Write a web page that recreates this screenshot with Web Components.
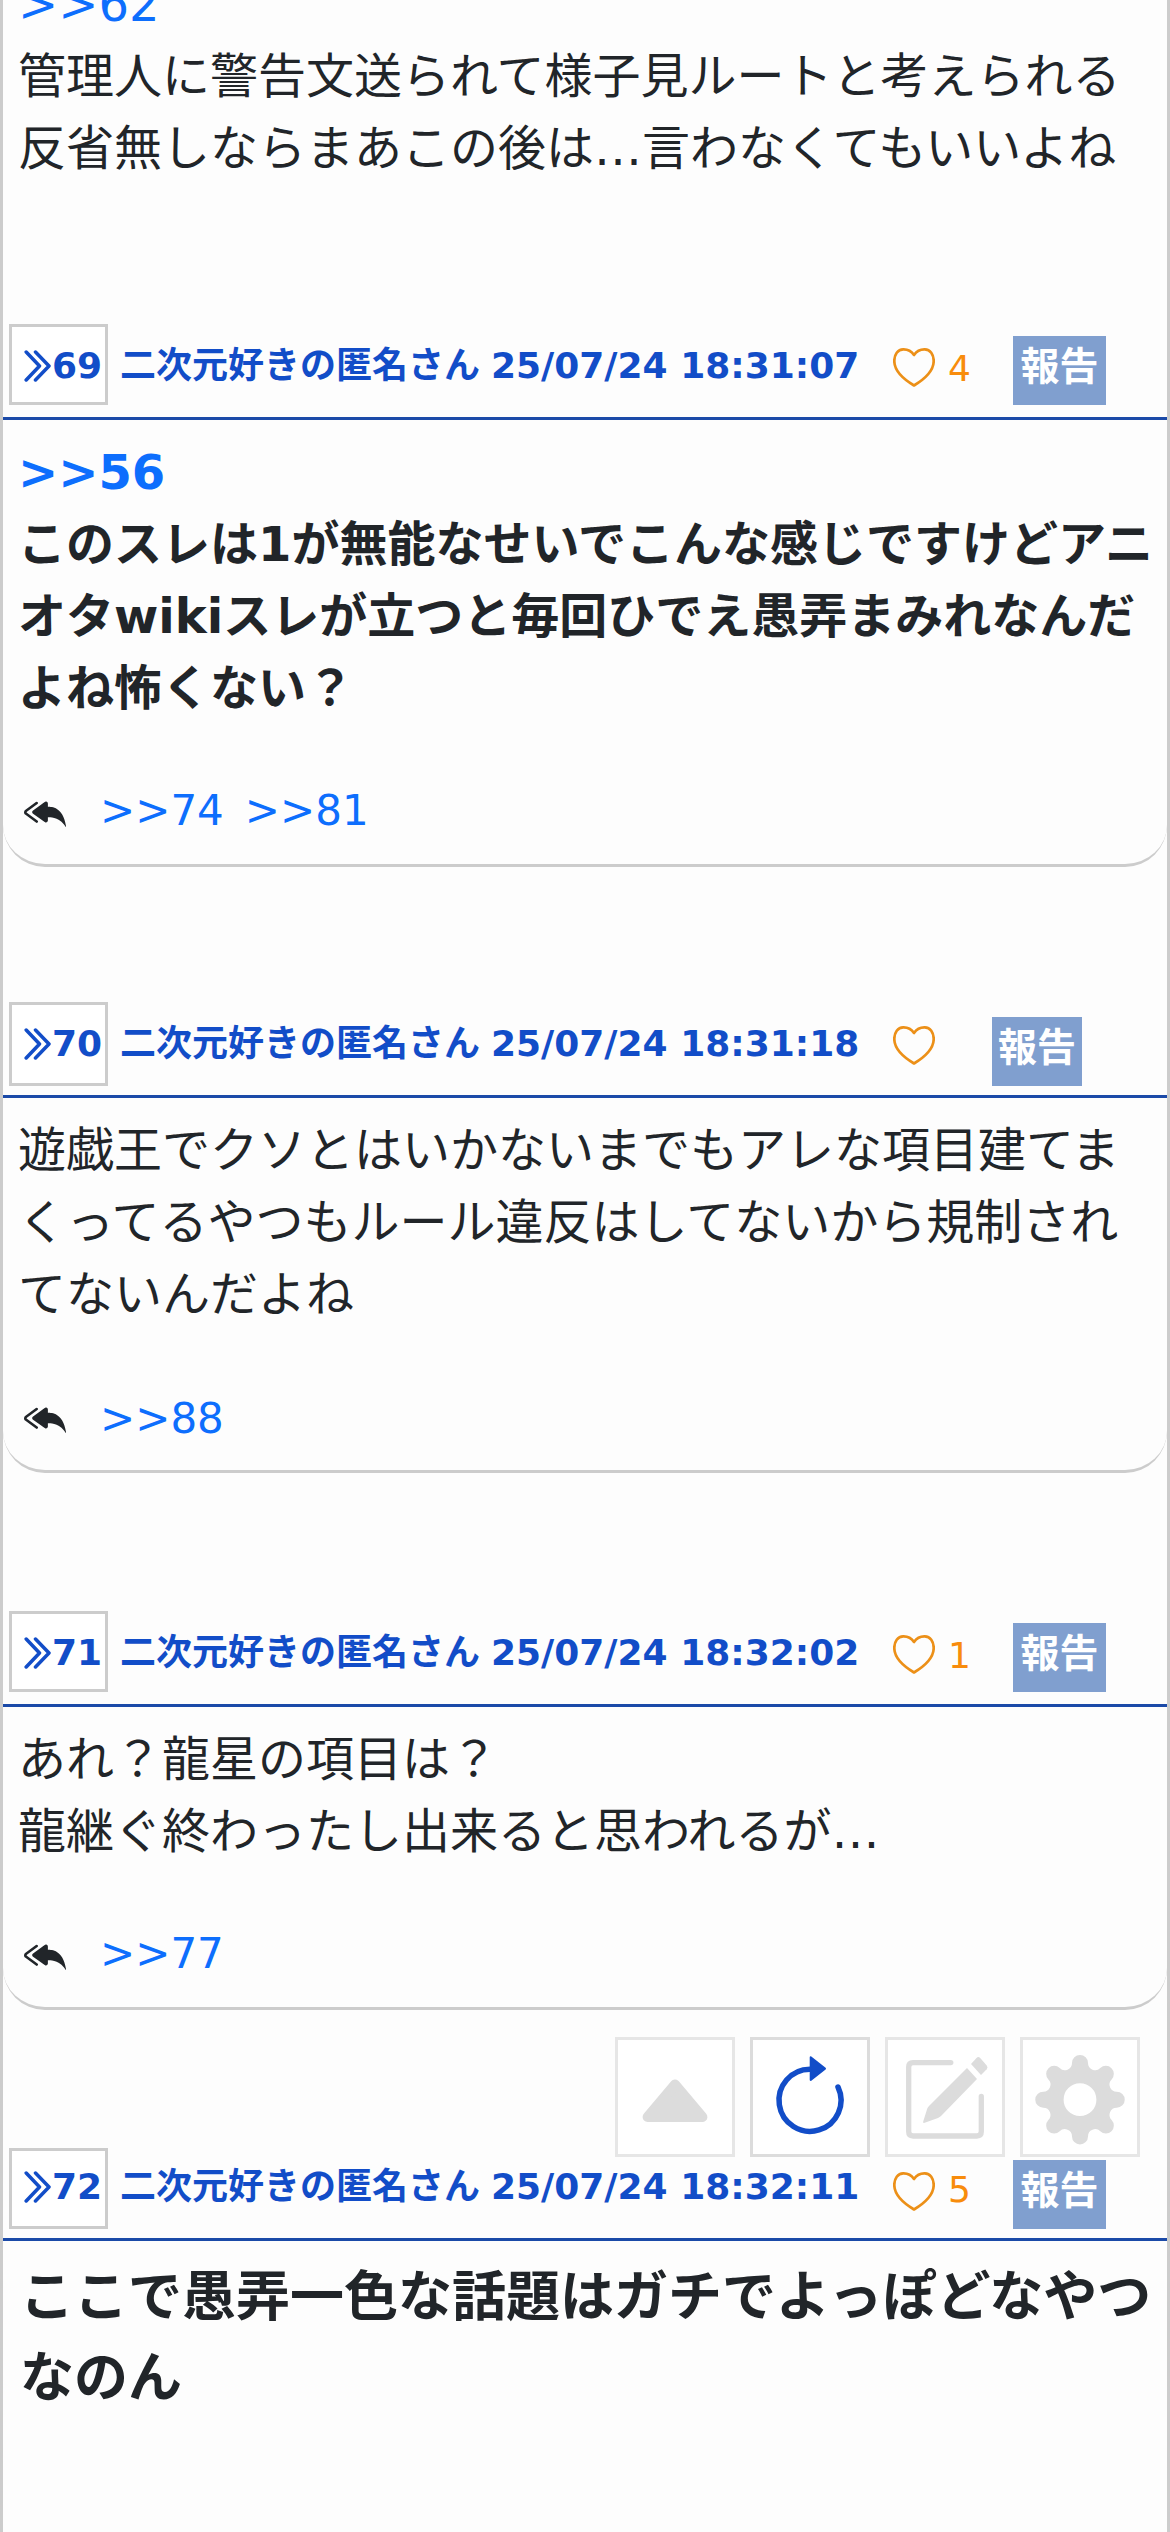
<!DOCTYPE html>
<html lang="ja">
<head>
<meta charset="utf-8">
<title>スレッド</title>
<style>
html,body{margin:0;padding:0}
body{width:1170px;height:2532px;overflow:hidden;background:#fdfdfd;color:#212529;font-family:"DejaVu Sans","Noto Sans CJK JP",sans-serif;font-size:48px;line-height:72px}
</style>
</head>
<body>
<thread-view>
  <thread-post cut>
    <ref-link>&gt;&gt;62</ref-link><br>管理人に警告文送られて様子見ルートと考えられる<br>反省無しならまあこの後は…言わなくてもいいよね
  </thread-post>
  <thread-post no="69" date="25/07/24 18:31:07" likes="4" replies="74 81" weight="bold" style="margin-top:140px">
    <ref-link>&gt;&gt;56</ref-link><br>このスレは1が無能なせいでこんな感じですけどアニ<br>オタwikiスレが立つと毎回ひでえ愚弄まみれなんだ<br>よね怖くない？
  </thread-post>
  <thread-post no="70" date="25/07/24 18:31:18" replies="88" box="tall" style="margin-top:135px">
    遊戯王でクソとはいかないまでもアレな項目建てま<br>くってるやつもルール違反はしてないから規制され<br>てないんだよね
  </thread-post>
  <thread-post no="71" date="25/07/24 18:32:02" likes="1" replies="77" style="margin-top:138px">
    あれ？龍星の項目は？<br>龍継ぐ終わったし出来ると思われるが…
  </thread-post>
  <thread-post no="72" date="25/07/24 18:32:11" likes="5" weight="bold" size="large" box="low" style="margin-top:135px">
    ここで愚弄一色な話題はガチでよっぽどなやつ<br>なのん
  </thread-post>
  <tool-bar slot="tools">
    <tool-button icon="up"></tool-button>
    <tool-button icon="reload" active></tool-button>
    <tool-button icon="edit"></tool-button>
    <tool-button icon="gear"></tool-button>
  </tool-bar>
</thread-view>
<script>
class ThreadView extends HTMLElement{
  constructor(){
    super();
    this.attachShadow({mode:"open"}).innerHTML=`<style>
      :host{display:flex;flex-direction:column;box-sizing:border-box;width:1170px;height:2532px;border:solid #ccc;border-width:0 3px;overflow:hidden;position:relative}
      .tools{position:absolute;right:27px;top:2037px}
    </style><slot></slot><div class="tools"><slot name="tools"></slot></div>`;
  }
}
class RefLink extends HTMLElement{
  constructor(){
    super();
    this.attachShadow({mode:"open"}).innerHTML=`<style>:host{display:inline;color:#0d6efd}</style><slot></slot>`;
  }
}
class LikeButton extends HTMLElement{
  connectedCallback(){
    const n=this.getAttribute("count")||"";
    this.attachShadow({mode:"open"}).innerHTML=`<style>
      :host{display:flex;gap:13px;color:#f88c0c;font-size:36px;line-height:54px}
      svg{flex:none;margin-top:var(--heart-top,24px)}
      span{margin-top:18px}
    </style><svg width="42" height="39" viewBox="0 0 42 39" fill="none" stroke="#ec9018" stroke-width="2.700" stroke-linejoin="round"><path d="M21 7C18 2.600 13.500 1.300 10.200 1.400C4.800 1.500 1.300 6.500 1.300 13C1.300 23.500 11 31.500 21 37.500C31 31.500 40.700 23.500 40.700 13C40.700 6.500 37.200 1.500 31.800 1.400C28.500 1.300 24 2.600 21 7Z"/></svg>${n?`<span>${n}</span>`:""}`;
  }
}
class PostHeader extends HTMLElement{
  connectedCallback(){
    const a=k=>this.getAttribute(k)||"";
    this.attachShadow({mode:"open"}).innerHTML=`<style>
      :host{display:flex;align-items:flex-start;box-sizing:border-box;height:96px;border-bottom:3px solid #1b4aa8;color:#124dc8;font-weight:bold;font-size:36px;line-height:54px;white-space:nowrap}
      .no{display:flex;box-sizing:border-box;flex:none;width:99px;height:81px;margin-left:6px;border:3px solid #ccc;background:#fff;padding:12px 0 0 12px}
      .no svg{flex:none;margin-top:10px}
      .name{display:flex;gap:11px;flex:none;width:773px;margin:15px 0 0 12px}
      like-button{flex:none;width:120px;font-weight:normal}
      .report{flex:none;box-sizing:border-box;width:93px;height:69px;margin-top:12px;background:#809fcf;color:#fff;font-size:39px;line-height:62px;text-align:center}
      :host([box=tall]) .no{height:84px}
      :host([box=tall]) like-button{width:99px}
      :host([box=tall]) .report{width:90px;margin-top:15px}
      :host([box=low]) .no{margin-top:3px;padding-top:9px}
      :host([box=low]) like-button{--heart-top:27px}
      :host([box=low]) .report{margin-top:15px}
    </style>
    <div class="no"><svg width="28" height="34" viewBox="0 0 28 34" fill="none" stroke="#124dc8" stroke-width="3.500" stroke-linecap="round" stroke-linejoin="round"><path d="M2.200 3L15.500 17L2.200 31M11.500 3L25 17L11.500 31"/></svg><span>${a("no")}</span></div>
    <div class="name"><span>二次元好きの匿名さん</span><span>${a("date")}</span></div>
    <like-button count="${a("likes")}"></like-button>
    <div class="report">報告</div>`;
  }
}
class ReplyList extends HTMLElement{
  connectedCallback(){
    const refs=this.getAttribute("refs").split(" ").map(r=>`<ref-link>&gt;&gt;${r}</ref-link>`).join("");
    this.attachShadow({mode:"open"}).innerHTML=`<style>
      :host{display:flex;align-items:flex-start;height:63px;font-size:42px;line-height:63px;font-weight:normal}
      svg{flex:none;margin:12px 34px 0 6px}
      div{display:flex;gap:21px;padding-top:var(--refs-drop,0px)}
    </style><svg width="42" height="42" viewBox="0 0 16 16" fill="#212529"><path d="M8.021 11.9 3.453 8.62a.719.719 0 0 1 0-1.238L8.021 4.1a.716.716 0 0 1 1.079.619V6c1.500 0 6 0 7 8-2.500-4.500-7-4-7-4v1.281c0 .56-.606.898-1.079.62z"/><path d="M5.232 4.293a.5.5 0 0 1-.106.7L1.114 7.945l-.042.028a.147.147 0 0 0 0 .252l.042.028 4.012 2.954a.5.5 0 1 1-.593.805L.539 9.073a1.147 1.147 0 0 1 0-1.946l3.994-2.940a.5.5 0 0 1 .699.106z"/></svg><div>${refs}</div>`;
  }
}
class ThreadPost extends HTMLElement{
  connectedCallback(){
    const a=k=>this.getAttribute(k)||"";
    const cut=this.hasAttribute("cut"),reps=a("replies");
    this.attachShadow({mode:"open"}).innerHTML=`<style>
      :host{display:block;flex:none}
      .body{box-sizing:border-box;padding:16px 0 22px 15px;white-space:nowrap}
      .body.closed{border-bottom:3px solid #ccc;border-radius:0 0 42px 42px}
      :host([cut]) .body{margin-top:-48px;padding-bottom:0}
      :host([weight=bold]) .text{font-weight:bold}
      :host([size=large]) .body{padding-left:17px;font-size:54px;line-height:81px}
      :host([box=tall]){--refs-drop:2px}
      reply-list{margin-top:55px}
    </style>
    ${cut?"":`<post-header no="${a("no")}" date="${a("date")}" likes="${a("likes")}" box="${a("box")}"></post-header>`}
    <div class="body${reps?" closed":""}"><div class="text"><slot></slot></div>${reps?`<reply-list refs="${reps}"></reply-list>`:""}</div>`;
  }
}
class ToolBar extends HTMLElement{
  constructor(){
    super();
    this.attachShadow({mode:"open"}).innerHTML=`<style>:host{display:flex;gap:15px}</style><slot></slot>`;
  }
}
// Gear outline: eight round teeth joined by tangent concave arcs.
function gearPath(cx,cy){
  const R=36.8,r=8,V=39.7,v=7.2,f=r/(r+v);
  const p=(d,q)=>[cx+q*Math.cos(d*Math.PI/180),cy+q*Math.sin(d*Math.PI/180)];
  const mid=(t,w)=>[t[0]+(w[0]-t[0])*f,t[1]+(w[1]-t[1])*f].map(n=>n.toFixed(2)).join(" ");
  let d="";
  for(let k=0;k<8;k++){
    const t=p(k*45,R),a=mid(t,p(k*45-22.5,V)),b=mid(t,p(k*45+22.5,V));
    d+=(k?`A${v} ${v} 0 0 0 ${a}`:`M${a}`)+`A${r} ${r} 0 0 1 ${b}`;
  }
  d+=`A${v} ${v} 0 0 0 ${mid(p(0,R),p(-22.5,V))}Z`;
  return d+`M${cx+16.4} ${cy}A16.400 16.400 0 1 0 ${cx-16.4} ${cy}A16.400 16.400 0 1 0 ${cx+16.4} ${cy}Z`;
}
const icons={
  up:`<path d="M60 47.500L87.400 80H32.600Z" fill="#dcdcdc" stroke="#dcdcdc" stroke-width="10" stroke-linejoin="round"/>`,
  reload:`<path d="M88 50A31 31 0 1 1 60 32.300" fill="none" stroke="#124dc8" stroke-width="5.500" stroke-linecap="round"/><path d="M60.700 20.300L75 31.600L60.700 43Z" fill="#124dc8" stroke="#124dc8" stroke-width="2" stroke-linejoin="round"/>`,
  edit:`<path d="M65.800 25.600H28Q23.700 25.600 23.700 30V94.600Q23.700 99 28 99H92Q96.300 99 96.300 94.600V59.400" fill="none" stroke="#dcdcdc" stroke-width="5.300" stroke-linecap="round"/><path d="M82 31L92 42L56 79Q54.800 80.200 53 81L39 86Q37.800 86 38.200 84.500L42.300 71.500Q42.800 70 44 69Z" fill="#dcdcdc"/><path d="M86 27L91.500 21Q93.300 19.200 95.200 21L101.700 28.500Q103.300 30.500 101.700 32.300L96 38Z" fill="#dcdcdc"/>`,
  gear:`<path d="${gearPath(60,62.7)}" fill="#dcdcdc" fill-rule="evenodd"/>`
};
class ToolButton extends HTMLElement{
  connectedCallback(){
    this.attachShadow({mode:"open"}).innerHTML=`<style>
      :host{display:block;box-sizing:border-box;width:120px;height:120px;border:3px solid #e6e6e6;background:#fff}
      :host([active]){border-color:#dcdcdc}
      svg{display:block;margin:-3px;overflow:visible}
    </style><svg width="120" height="120" viewBox="0 0 120 120">${icons[this.getAttribute("icon")]}</svg>`;
  }
}
customElements.define("ref-link",RefLink);
customElements.define("like-button",LikeButton);
customElements.define("post-header",PostHeader);
customElements.define("reply-list",ReplyList);
customElements.define("thread-post",ThreadPost);
customElements.define("tool-button",ToolButton);
customElements.define("tool-bar",ToolBar);
customElements.define("thread-view",ThreadView);
</script>
</body>
</html>
